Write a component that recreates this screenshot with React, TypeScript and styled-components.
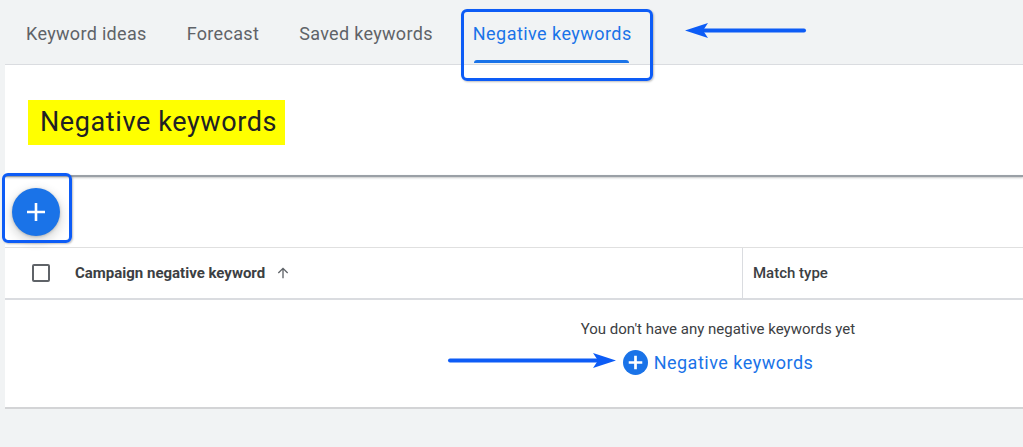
import * as React from "react";
import styled, { createGlobalStyle } from "styled-components";

const GlobalStyle = createGlobalStyle`
  html, body {
    margin: 0;
    padding: 0;
    background: #f1f3f4;
  }
  body {
    font-family: Roboto, "Noto Sans", Arial, sans-serif;
    color: #202124;
  }
`;

const MARK = "#0d5cf6";

const Page = styled.div`
  position: relative;
  width: 1023px;
  height: 447px;
  overflow: hidden;
  background: #f1f3f4;
`;

const TabBar = styled.nav`
  display: flex;
  gap: 40px;
  height: 64px;
  padding-left: 26px;
  box-sizing: border-box;
`;

const Tab = styled.div<{ $active?: boolean }>`
  position: relative;
  display: flex;
  align-items: center;
  padding-top: 3px;
  font-size: 18px;
  letter-spacing: ${(p) => (p.$active ? "0.45px" : "0.32px")};
  color: ${(p) => (p.$active ? "#1a73e8" : "#5f6368")};
  &::after {
    content: "";
    display: ${(p) => (p.$active ? "block" : "none")};
    position: absolute;
    left: 1px;
    right: 3px;
    bottom: 1px;
    height: 3px;
    border-radius: 3px 3px 0 0;
    background: #1a73e8;
  }
`;

const Panel = styled.section`
  margin-left: 5px;
  background: #fff;
  border-top: 1px solid #dadce0;
  border-bottom: 2px solid #d3d4d6;
  overflow: hidden;
`;

const TitleSection = styled.div`
  padding: 35px 0 30px 23px;
`;

const Title = styled.h1`
  display: inline-block;
  margin: 0;
  padding: 0 8px 0 12px;
  height: 45px;
  line-height: 45px;
  background: #ffff00;
  font-weight: 400;
  font-size: 27px;
  letter-spacing: 0.6px;
  color: #202124;
`;

const Separator = styled.div`
  height: 2px;
  background: #9aa0a6;
  box-shadow: 0 1px 2px rgba(60, 64, 67, 0.3);
`;

const Toolbar = styled.div`
  display: flex;
  align-items: center;
  height: 70px;
  padding-left: 7px;
  border-bottom: 1px solid #e0e0e0;
`;

const Fab = styled.button`
  display: flex;
  align-items: center;
  justify-content: center;
  width: 48px;
  height: 48px;
  padding: 0;
  border: none;
  border-radius: 50%;
  background: #1a73e8;
  box-shadow: 0 1px 3px rgba(60, 64, 67, 0.3), 0 4px 8px 3px rgba(60, 64, 67, 0.15);
  cursor: pointer;
`;

const Table = styled.div`
  width: 1426px;
`;

const HeaderRow = styled.div`
  display: grid;
  grid-template-columns: 737px 1fr;
  height: 50px;
  border-bottom: 2px solid #dadce0;
`;

const HeaderCell = styled.div<{ $divider?: boolean }>`
  display: flex;
  align-items: center;
  gap: 10px;
  padding-left: ${(p) => (p.$divider ? "10px" : "27px")};
  border-left: ${(p) => (p.$divider ? "1px solid #dadce0" : "none")};
  font-size: 15px;
  font-weight: ${(p) => (p.$divider ? 500 : 700)};
  color: #3c4043;
`;

const Checkbox = styled.span`
  width: 14px;
  height: 14px;
  margin-right: 15px;
  border: 2px solid #5f6368;
  border-radius: 2px;
`;

const EmptyState = styled.div`
  display: flex;
  flex-direction: column;
  align-items: center;
  padding: 20px 0 32px;
  gap: 12px;
`;

const EmptyText = styled.div`
  font-size: 15px;
  color: #3c4043;
`;

const AddLink = styled.a`
  display: flex;
  align-items: center;
  gap: 6px;
  font-size: 18px;
  letter-spacing: 0.5px;
  color: #1a73e8;
  text-decoration: none;
  cursor: pointer;
`;

const Mark = styled.div`
  position: absolute;
  border: 3px solid ${MARK};
  border-radius: 6px;
  box-shadow: 1px 1px 2px rgba(0, 0, 0, 0.25);
  pointer-events: none;
`;

const Pointer = styled.svg`
  position: absolute;
  overflow: visible;
  pointer-events: none;
`;

const PlusCircle = ({ size }: { size: number }) => (
  <svg width={size} height={size} viewBox="0 0 24 24">
    <circle cx="12" cy="12" r="12" fill="#1a73e8" />
    <path d="M12 5.5v13M5.5 12h13" stroke="#fff" strokeWidth="2.6" />
  </svg>
);

const ArrowUp = () => (
  <svg width="16" height="16" viewBox="0 0 24 24">
    <path d="M12 20V5M5 12l7-7 7 7" fill="none" stroke="#5f6368" strokeWidth="2" />
  </svg>
);

const tabs = ["Keyword ideas", "Forecast", "Saved keywords", "Negative keywords"];

export default function App() {
  return (
    <Page>
      <GlobalStyle />
      <TabBar>
        {tabs.map((t) => (
          <Tab key={t} $active={t === "Negative keywords"}>
            {t}
          </Tab>
        ))}
      </TabBar>
      <Panel>
        <TitleSection>
          <Title>Negative keywords</Title>
        </TitleSection>
        <Separator />
        <Toolbar>
          <Fab aria-label="Add">
            <svg width="24" height="24" viewBox="0 0 24 24">
              <path d="M12 3v18M3 12h18" stroke="#fff" strokeWidth="2.6" />
            </svg>
          </Fab>
        </Toolbar>
        <Table>
          <HeaderRow>
            <HeaderCell>
              <Checkbox />
              Campaign negative keyword
              <ArrowUp />
            </HeaderCell>
            <HeaderCell $divider>Match type</HeaderCell>
          </HeaderRow>
          <EmptyState>
            <EmptyText>You don't have any negative keywords yet</EmptyText>
            <AddLink>
              <PlusCircle size={25} />
              Negative keywords
            </AddLink>
          </EmptyState>
        </Table>
      </Panel>

      <Mark style={{ left: 461, top: 9, width: 186, height: 66 }} />
      <Mark style={{ left: 2, top: 173, width: 64, height: 64 }} />

      <Pointer style={{ left: 684, top: 20 }} width="122" height="22">
        <path d="M120 10.5H14" stroke={MARK} strokeWidth="4" strokeLinecap="round" />
        <path d="M1 10.5L24 3l-5 7.5 5 7.5z" fill={MARK} />
      </Pointer>
      <Pointer style={{ left: 448, top: 350 }} width="170" height="22">
        <path d="M2 10.5h150" stroke={MARK} strokeWidth="4" strokeLinecap="round" />
        <path d="M168 10.5L145 3l5 7.5-5 7.5z" fill={MARK} />
      </Pointer>
    </Page>
  );
}
